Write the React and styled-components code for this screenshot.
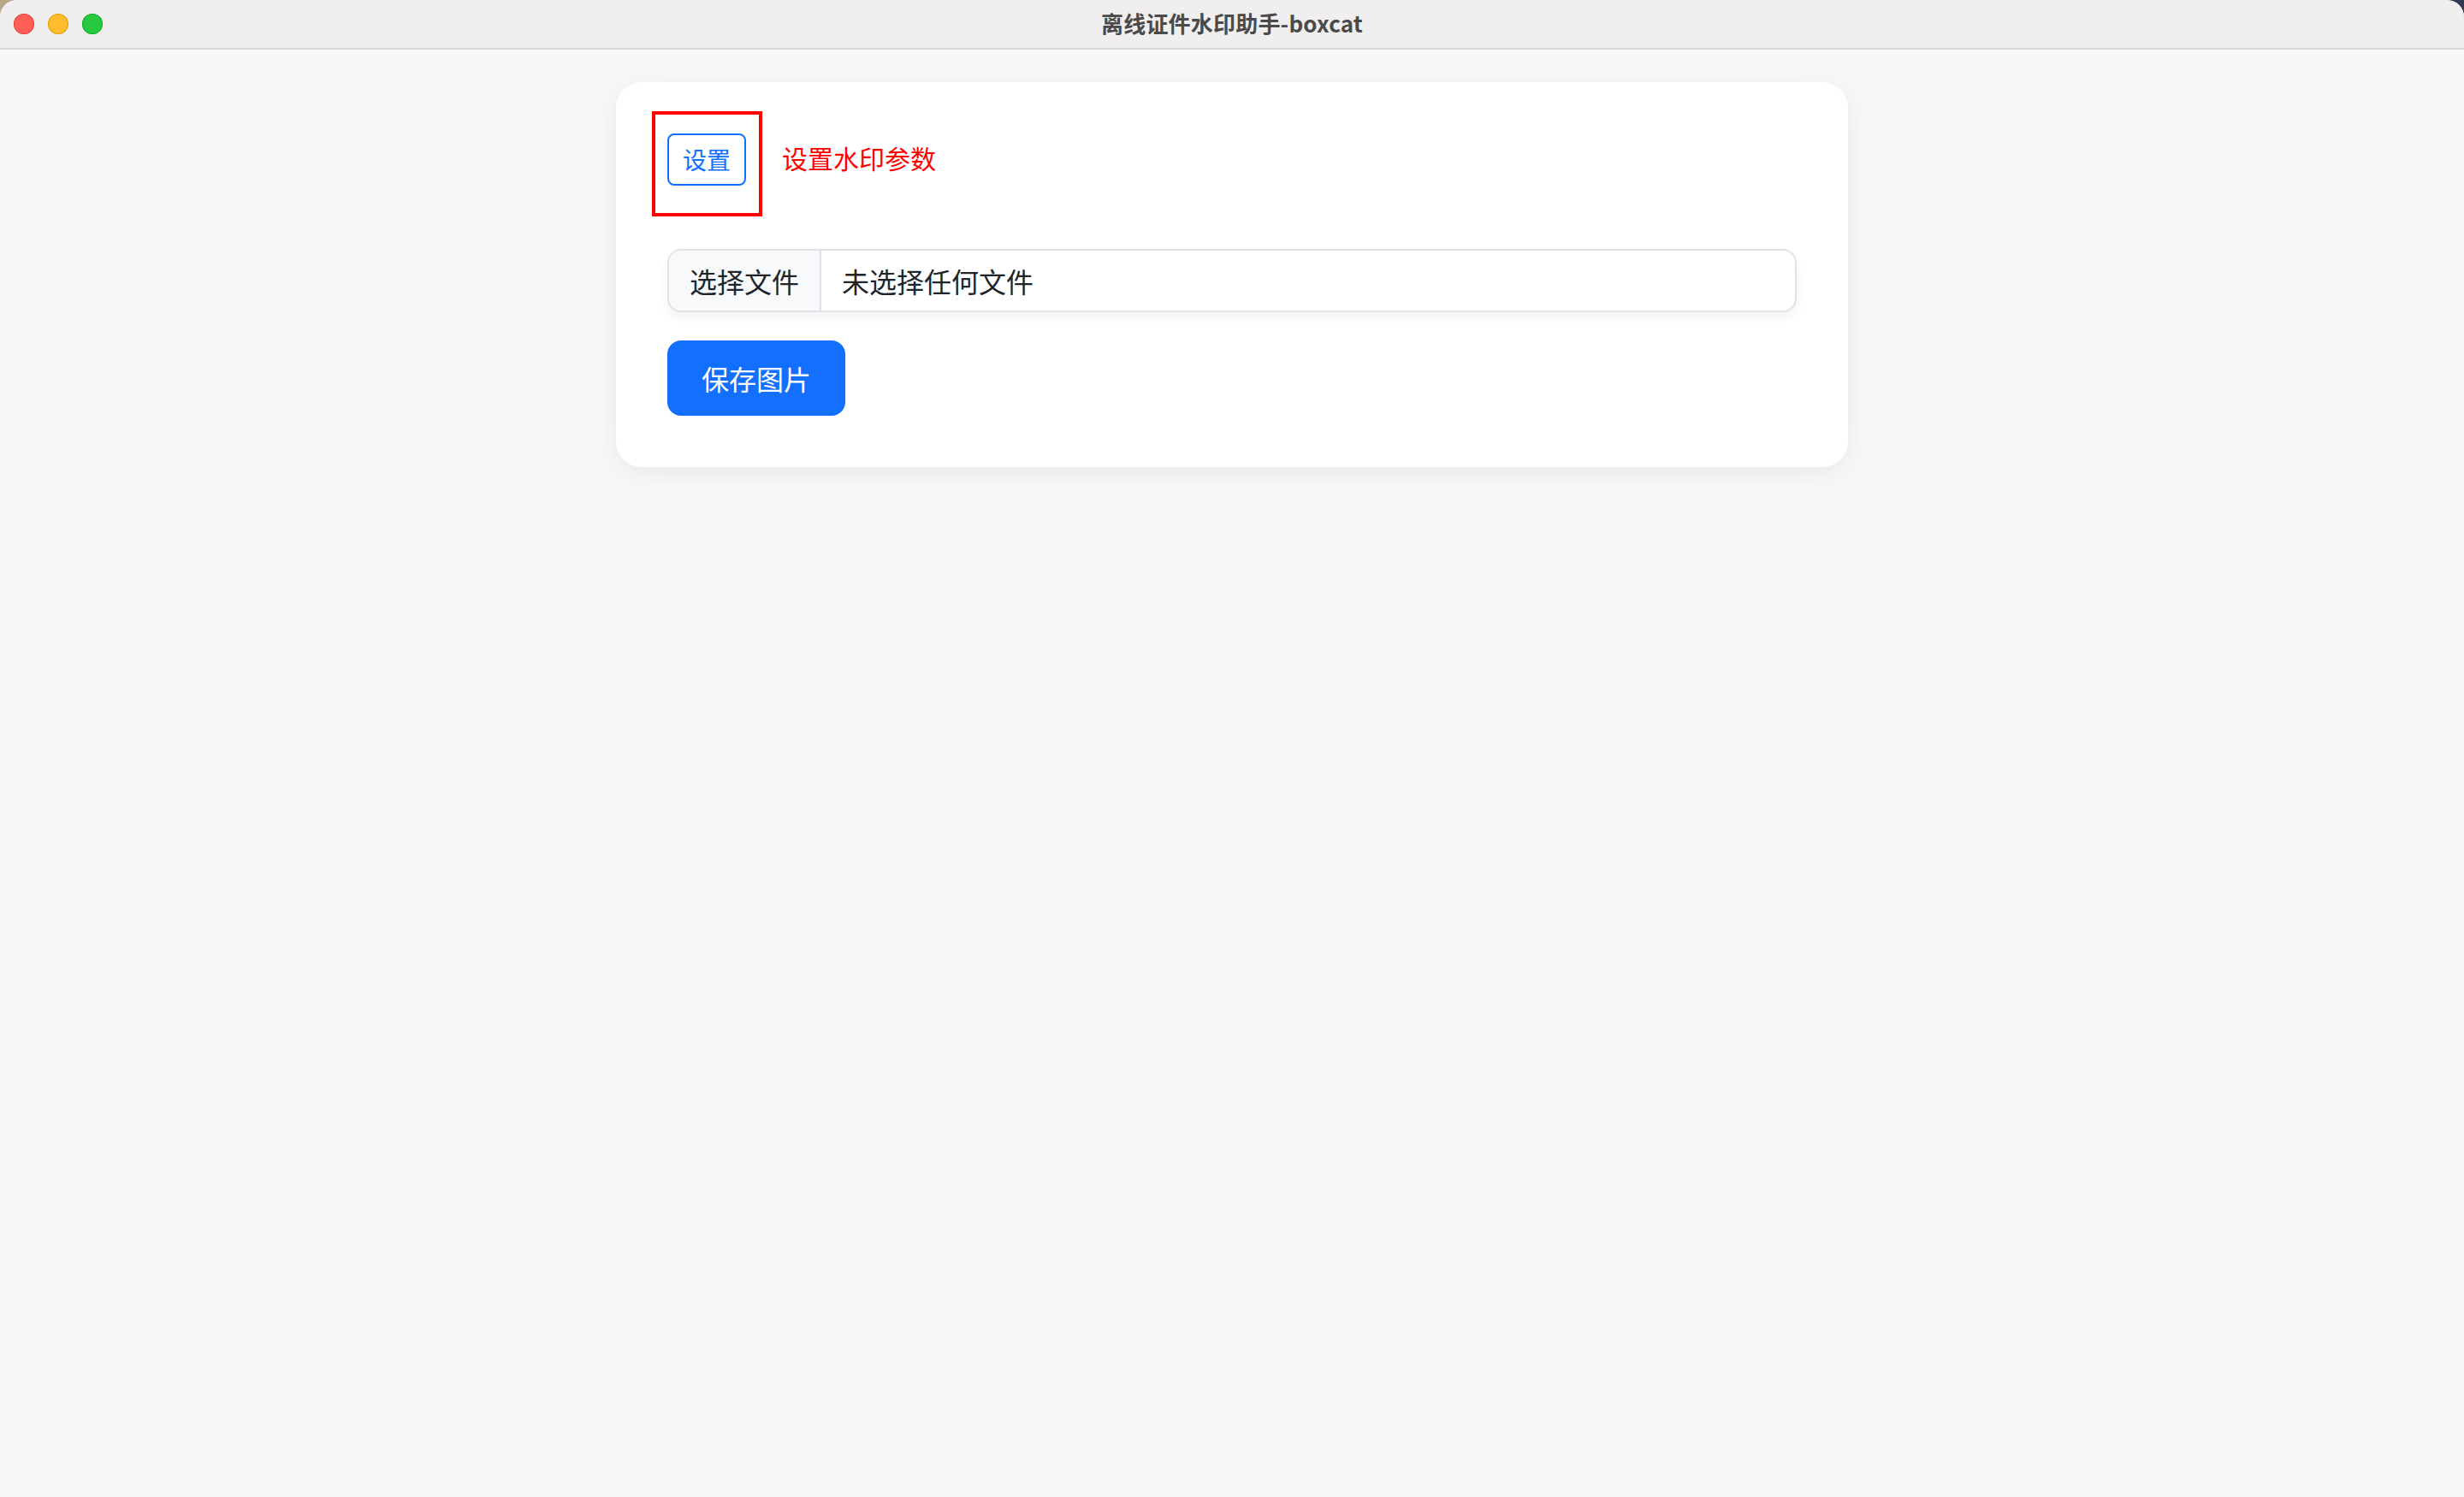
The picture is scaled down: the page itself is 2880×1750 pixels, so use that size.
import React from "react";
import styled, { createGlobalStyle } from "styled-components";

const GlobalStyle = createGlobalStyle`
  html, body {
    margin: 0;
    padding: 0;
    width: 2880px;
    height: 1750px;
    overflow: hidden;
    background: linear-gradient(90deg, #b9a98a 0%, #55606e 50%, #2e3a52 100%);
  }
  body {
    font-family: "Noto Sans CJK SC", "Noto Sans", "Liberation Sans", sans-serif;
  }
  #root { height: 1750px; }
`;

const Window = styled.div`
  display: flex;
  flex-direction: column;
  height: 1750px;
  border-radius: 20px 20px 0 0;
  overflow: hidden;
  background: #f7f8fa;
`;

const TitleBar = styled.div`
  position: relative;
  display: flex;
  align-items: center;
  justify-content: center;
  height: 56px;
  flex-shrink: 0;
  background: #f0eeee;
  border-bottom: 2px solid #d6d5d5;
  box-sizing: content-box;
`;

const Lights = styled.div`
  position: absolute;
  left: 16px;
  top: 16px;
  display: flex;
  gap: 16px;
`;

const Light = styled.span`
  width: 24px;
  height: 24px;
  border-radius: 50%;
  background: ${(p) => p.$c};
  box-shadow: inset 0 0 0 1px ${(p) => p.$b};
`;

const Title = styled.div`
  font-size: 26px;
  font-weight: 700;
  color: #4a4a4a;
  letter-spacing: 0.2px;
  margin-top: -4px;
`;

const Main = styled.main`
  flex: 1;
  display: flex;
  justify-content: center;
  align-items: flex-start;
  padding-top: 38px;
`;

const Card = styled.section`
  width: 1440px;
  box-sizing: border-box;
  padding: 60px;
  background: #ffffff;
  border-radius: 30px;
  box-shadow: 0 6px 30px rgba(0, 0, 0, 0.07);
  display: flex;
  flex-direction: column;
`;

const SettingsRow = styled.div`
  display: flex;
  align-items: center;
  gap: 42px;
  margin-bottom: 74px;
`;

const Annotated = styled.div`
  position: relative;
  display: flex;
`;

const RedFrame = styled.div`
  position: absolute;
  left: -18px;
  top: -26px;
  right: -19px;
  bottom: -36px;
  border: 4px solid #ff0000;
  pointer-events: none;
`;

const OutlineButton = styled.button`
  font-family: inherit;
  font-size: 28px;
  line-height: 41px;
  padding: 8px 16px;
  color: #136ffd;
  background: #ffffff;
  border: 2px solid #136ffd;
  border-radius: 8px;
  cursor: pointer;
`;

const Hint = styled.span`
  font-size: 30px;
  color: #ff0000;
  margin-top: -6px;
`;

const FileGroup = styled.label`
  display: flex;
  height: 74px;
  box-sizing: border-box;
  border: 2px solid #dee2e6;
  border-radius: 16px;
  overflow: hidden;
  box-shadow: 0 6px 12px rgba(0, 0, 0, 0.05);
  margin-bottom: 33px;
  cursor: pointer;
`;

const FilePick = styled.span`
  display: flex;
  align-items: center;
  padding: 0 24px;
  background: #f8f9fa;
  border-right: 2px solid #dee2e6;
  font-size: 32px;
  color: #212529;
`;

const FileName = styled.span`
  display: flex;
  align-items: center;
  padding: 0 24px;
  font-size: 32px;
  color: #212529;
`;

const PrimaryButton = styled.button`
  align-self: flex-start;
  font-family: inherit;
  font-size: 32px;
  line-height: 48px;
  padding: 18px 38px;
  color: #ffffff;
  background: #136ffd;
  border: 2px solid #136ffd;
  border-radius: 16px;
  cursor: pointer;
`;

export default function App() {
  return (
    <>
      <GlobalStyle />
      <Window>
        <TitleBar>
          <Lights>
            <Light $c="#ff5f57" $b="#e2463f" />
            <Light $c="#febc2e" $b="#e1a116" />
            <Light $c="#28c840" $b="#14ae2b" />
          </Lights>
          <Title>离线证件水印助手-boxcat</Title>
        </TitleBar>
        <Main>
          <Card>
            <SettingsRow>
              <Annotated>
                <OutlineButton>设置</OutlineButton>
                <RedFrame />
              </Annotated>
              <Hint>设置水印参数</Hint>
            </SettingsRow>
            <FileGroup>
              <FilePick>选择文件</FilePick>
              <FileName>未选择任何文件</FileName>
            </FileGroup>
            <PrimaryButton>保存图片</PrimaryButton>
          </Card>
        </Main>
      </Window>
    </>
  );
}
